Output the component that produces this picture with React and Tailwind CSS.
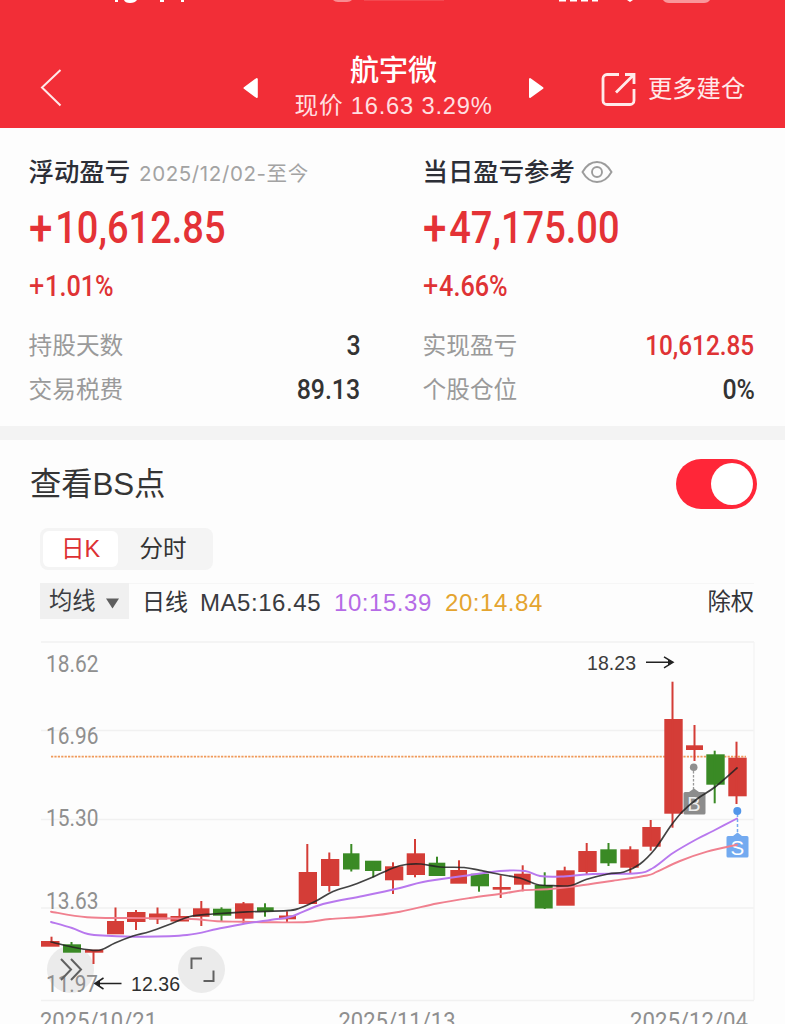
import React from "react";

const RED = "#d43d37";
const GREEN = "#3a8a25";

// [left, right, bodyTop, bodyBottom, wickX, wickTop, wickBottom, falling]
const candles = [
  [41, 59.5, 941, 946.7, 51.5, 936.7, 942, 0],
  [63, 81, 944.3, 952.7, 71.5, 942, 950, 1],
  [85, 103.3, 949.7, 952.7, 93.5, 950, 964, 0],
  [107, 124, 921, 934.3, 115.5, 907.5, 922, 0],
  [127, 145.5, 912, 922, 136, 910, 930, 0],
  [149, 167.3, 913.5, 919.5, 157.5, 907.5, 924, 0],
  [170.5, 189, 916, 921.5, 179.5, 908.5, 918, 0],
  [193, 209.5, 908.3, 916.8, 201.3, 901, 926, 0],
  [213, 231.3, 908.7, 915.7, 221.5, 907.3, 921.3, 1],
  [235, 253.5, 903.3, 918.7, 243.5, 902, 923.3, 0],
  [257, 273.7, 907.3, 911.5, 265, 903.3, 916.7, 1],
  [279, 296, 915.5, 919.3, 287, 911.3, 922, 0],
  [298.7, 317, 872, 904, 307.3, 844, 874, 0],
  [321, 339.3, 859, 886, 329.3, 852.5, 891.7, 0],
  [343, 359.5, 853.3, 869.5, 351.3, 844, 871.5, 1],
  [365, 381.3, 860.7, 871, 373.3, 861, 877.3, 1],
  [385, 403.3, 866.3, 880.3, 393, 862.3, 894, 0],
  [406.7, 425, 853.3, 875, 415, 839, 877.3, 0],
  [428.7, 445.3, 862.7, 876, 437, 856.7, 865, 1],
  [450.3, 467, 870, 883.7, 459, 860.3, 872, 0],
  [470.7, 489, 873.7, 886.3, 479, 875, 891.7, 1],
  [492.7, 510.7, 887, 889.7, 500.7, 875.3, 898, 0],
  [514, 530.7, 873.7, 884.7, 522.7, 865.3, 891.3, 0],
  [534.7, 552.7, 885, 908.5, 544.7, 872.3, 909, 1],
  [556.3, 574.7, 870.3, 905.7, 564.7, 866.7, 873, 0],
  [578.3, 596.7, 851, 872, 586.7, 843, 875, 0],
  [600.3, 616.7, 849.3, 863.3, 608.5, 843, 866, 1],
  [620.3, 638.7, 849.3, 867.7, 630.3, 846.3, 873.3, 0],
  [642.3, 660.7, 827, 846.7, 650.7, 820, 850.7, 0],
  [664.3, 682.7, 719, 813.7, 672.5, 681.7, 827.7, 0],
  [686, 703, 745.3, 750, 694.5, 725, 761, 0],
  [706.3, 724.7, 754.3, 784.7, 714.7, 750.7, 803.3, 1],
  [728.3, 746.7, 757.7, 796.3, 736.5, 741.7, 804, 0],
];

const ma5 = [[51, 942], [72, 947], [93, 950.3], [102, 949.5], [115, 943], [133, 936], [150, 931.5], [173, 923], [190, 916.5], [213, 914], [247, 911.8], [287, 910.7], [300, 908], [317, 900.5], [333, 891.5], [353, 885], [373, 877], [393, 868], [406, 864.5], [421, 864], [440, 867], [464, 867.5], [480, 870.3], [500, 874.5], [520, 878], [537, 884.5], [553, 885.7], [571, 885.5], [586, 879.5], [608, 874], [624, 872], [640, 864], [655, 849], [670, 827], [682, 812], [697, 799], [715, 787], [737, 768]];
const ma10 = [[51, 922], [72, 928], [88, 934], [107, 935.7], [143, 936.7], [187, 935], [217, 929], [243, 924], [277, 919], [293, 916], [323, 904], [363, 896], [400, 888], [423, 882], [463, 876], [500, 871], [525, 871], [540, 876], [561, 876.5], [593, 874], [637, 873.3], [653, 868], [673, 853], [697, 839], [713, 831], [737, 818.5]];
const ma20 = [[51, 911.7], [87, 917.3], [130, 918], [163, 918.3], [197, 919.3], [217, 921.3], [243, 921.7], [277, 922.3], [307, 922], [330, 919], [363, 916.7], [400, 911.7], [437, 903.5], [470, 898], [503, 893.5], [523, 890.3], [550, 889], [577, 886], [613, 880.7], [647, 875.5], [657, 871.7], [680, 861], [707, 851.7], [737, 844.7]];

function smooth(p) {
  let d = `M${p[0][0]} ${p[0][1]}`;
  for (let i = 0; i < p.length - 1; i++) {
    const a = p[i - 1] || p[i];
    const b = p[i];
    const c = p[i + 1];
    const e = p[i + 2] || c;
    d += `C${b[0] + (c[0] - a[0]) / 6} ${b[1] + (c[1] - a[1]) / 6} ${c[0] - (e[0] - b[0]) / 6} ${c[1] - (e[1] - b[1]) / 6} ${c[0]} ${c[1]}`;
  }
  return d;
}

function StatusBar() {
  return (
    <svg className="block h-2 w-full" viewBox="0 0 785 8" fill="#fff">
      <path d="M115 0h3v2h-3zM124 0h13q-2 3-7 3t-6-3zM160 0h4v2h-4zM181 0h3v2h-3z" />
      <path d="M333 0h19q-2 2-5 2h-9q-3 0-5-2z" opacity=".45" />
      <path d="M364 0h80v1h-80z" opacity=".12" />
      <path d="M559 0h7v1.5h-7zM570 0h7v1.5h-7zM581 0h7v1.5h-7zM592 0h6v1.5h-6zM627 0h6l-3 2z" />
      <path d="M663 0h47q-2 3-6 3h-35q-4 0-6-3z" opacity=".5" />
    </svg>
  );
}

function Header() {
  return (
    <header className="h-32 bg-[#f22e37] text-white">
      <StatusBar />
      <div className="flex h-[120px] items-start">
        <svg className="mt-[60px] ml-[40px] h-[40px] w-[22px]" viewBox="0 0 22 40" fill="none" stroke="#ffe9e9" strokeWidth="2">
          <path d="M20.5 2L2 19.5L20.5 37.5" />
        </svg>
        <svg className="mt-[69px] ml-[180px] h-[22px] w-[18px]" viewBox="0 0 18 22" fill="#fff" stroke="#fff" strokeWidth="2" strokeLinejoin="round">
          <path d="M2.5 11L14.8 2V20z" />
        </svg>
        <div className="flex w-[267px] flex-col items-center pt-[45px]">
          <h1 className="h-[36px] text-[29px] leading-[36px] font-medium whitespace-nowrap">航宇微</h1>
          <p className="text-[23.7px] leading-[34px] tracking-[0.8px] whitespace-nowrap text-[#ffdfe0]">现价 16.63 3.29%</p>
        </div>
        <svg className="mt-[69px] -ml-px h-[22px] w-[20px]" viewBox="0 0 20 22" fill="#fff" stroke="#fff" strokeWidth="2" strokeLinejoin="round">
          <path d="M16.5 11L4 2V20z" />
        </svg>
        <svg className="mt-[62px] ml-[54px] h-[38px] w-[38px]" viewBox="600 70 38 38" fill="none" stroke="#ffeaea" strokeWidth="2.8">
          <path d="M619 74.5H607a4 4 0 0 0-4 4v22a4 4 0 0 0 4 4h23a4 4 0 0 0 4-4V89M625 74.5h9V84M634 74.5L616 92.5" />
        </svg>
        <span className="mt-[64px] ml-[10px] text-[24.3px] leading-[34px] whitespace-nowrap text-[#ffeaea]">更多建仓</span>
      </div>
    </header>
  );
}

function Row({ label, value, red }) {
  return (
    <div className="flex h-11 items-center justify-between">
      <span className="mt-[4px] text-[23.7px] text-[#9a9a9a]">{label}</span>
      <span className={`mt-[2px] origin-right font-[Roboto] text-[27.5px] font-medium whitespace-nowrap ${red ? "scale-x-[0.885] text-[#df3335]" : "scale-x-[0.905] text-[#333]"}`}>{value}</span>
    </div>
  );
}

function Gain({ amount, percent }) {
  return (
    <>
      <div className="mt-[10px] flex h-14 w-fit origin-left scale-x-[0.845] font-[Roboto] text-[45px] leading-[56px] font-medium text-[#e43236]">
        <span className="w-[31px] text-[50px]">+</span>
        <span>{amount}</span>
      </div>
      <div className="mt-[10px] flex h-10 w-fit origin-left scale-x-[0.87] font-[Roboto] text-[29px] leading-[40px] font-medium text-[#df3335]">
        <span className="w-[18.5px] text-[31px] font-normal">+</span>
        <span>{percent}</span>
      </div>
    </>
  );
}

function Summary() {
  return (
    <section className="flex h-[298px] gap-[62px] pt-[26px] pl-[28.5px]">
      <div className="w-[332px]">
        <div className="flex h-9 items-center">
          <h2 className="mt-px text-[25.4px] font-medium text-[#2c2e36]">浮动盈亏</h2>
          <span className="mt-[4px] ml-[9px] font-['Inter','Noto_Sans_CJK_SC',sans-serif] text-[20.5px] tracking-[0.6px] whitespace-nowrap text-[#a3a3a3]">2025/12/02-至今</span>
        </div>
        <Gain amount="10,612.85" percent="1.01%" />
        <div className="mt-[17px]">
          <Row label="持股天数" value="3" />
          <Row label="交易税费" value="89.13" />
        </div>
      </div>
      <div className="w-[332px]">
        <div className="flex h-9 items-center">
          <h2 className="mt-px text-[25.4px] font-medium whitespace-nowrap text-[#2c2e36]">当日盈亏参考</h2>
          <svg className="ml-[6px] h-6 w-[32px]" viewBox="0 0 32 24" fill="none" stroke="#9c9c9c" strokeWidth="1.9">
            <path d="M1.5 12C5.5 5 10 2 16 2s10.5 3 14.5 10C26.5 19 22 22 16 22S5.5 19 1.5 12z" />
            <circle cx="16" cy="12" r="5" />
          </svg>
        </div>
        <Gain amount="47,175.00" percent="4.66%" />
        <div className="mt-[17px]">
          <Row label="实现盈亏" value="10,612.85" red />
          <Row label="个股仓位" value="0%" />
        </div>
      </div>
    </section>
  );
}

function Controls() {
  return (
    <section className="pt-[18px]">
      <div className="flex h-[52px] items-center justify-between pr-[28px] pl-[30px]">
        <h2 className="mt-[3px] text-[31.3px] tracking-[-0.1px] text-[#353535]">查看BS点</h2>
        <div className="flex h-[50px] w-[81px] items-center justify-end rounded-full bg-[#ff2638] pr-[4px]">
          <span className="size-[42px] rounded-full bg-white" />
        </div>
      </div>
      <div className="mt-[18px] ml-[40px] flex h-[42px] w-[173px] rounded-[8px] bg-[#f4f4f4] p-[3px] text-[23.5px] leading-[36px]">
        <div className="h-9 w-[75px] rounded-[6px] bg-white text-center text-[#dd3033]">日K</div>
        <div className="flex-1 text-center text-[#333]"><span className="-ml-[2px]">分时</span></div>
      </div>
      <div className="mt-[13px] ml-[40px] flex h-[38px] w-[714px] items-start border-t border-[#f6f6f6] leading-[37px] whitespace-nowrap">
        <div className="-mt-px flex h-[36px] w-[89px] items-center bg-[#f0f0f0] pl-[9px]">
          <span className="text-[23.3px] leading-[34px] text-[#3d3e42]">均线</span>
          <svg className="mt-[4px] ml-[10px] h-[11px] w-[13px]" viewBox="0 0 14 11" fill="#5e5e5e"><path d="M0 0H14L7 11z" /></svg>
        </div>
        <span className="ml-[13px] text-[23px] text-[#333439]">日线</span>
        <span className="ml-[12px] w-[134px] text-[24px] tracking-[0.55px] text-[#3a3b40]">MA5:16.45</span>
        <span className="w-[111px] text-[24px] tracking-[0.55px] text-[#b56be6]">10:15.39</span>
        <span className="text-[24px] tracking-[0.55px] text-[#e4a42f]">20:14.84</span>
        <span className="ml-auto text-[23.3px] text-[#333439]">除权</span>
      </div>
    </section>
  );
}

function AxisText({ x, y, w, children }) {
  return (
    <text x={x} y={y} textLength={w} lengthAdjust="spacingAndGlyphs" fill="#8f8f8f" className="font-[Roboto] text-[24px]">
      {children}
    </text>
  );
}

function Chart() {
  return (
    <svg className="block h-[403px] w-[785px]" viewBox="0 621 785 403">
      <g stroke="#f1f1f1" strokeWidth="1.3">
        <path d="M41 642H754M41 730.5H754M41 819.5H754M41 908H754M41 1000.5H754" />
        <path d="M754 642V1000" stroke="#f5f5f5" />
      </g>
      <path d="M51 756.7H746" stroke="#f09a5a" strokeWidth="1.8" strokeDasharray="2.2 1.2" />
      <circle cx="70.5" cy="969.5" r="23.5" fill="#ebebeb" />
      <circle cx="201.5" cy="969.5" r="23.5" fill="#ebebeb" />

      <AxisText x={46} y={672} w={52.5}>18.62</AxisText>
      <AxisText x={46} y={743.5} w={52.5}>16.96</AxisText>
      <AxisText x={46} y={826} w={52.5}>15.30</AxisText>
      <AxisText x={46} y={909} w={52.5}>13.63</AxisText>
      <AxisText x={46} y={992} w={52}>11.97</AxisText>
      <AxisText x={40} y={1029} w={117}>2025/10/21</AxisText>
      <AxisText x={338.5} y={1029} w={117}>2025/11/13</AxisText>
      <AxisText x={630} y={1029} w={118}>2025/12/04</AxisText>

      {candles.map((c) => (
        <g key={c[0]} fill={c[7] ? GREEN : RED}>
          <rect x={c[0]} y={c[2]} width={c[1] - c[0]} height={c[3] - c[2]} />
          <rect x={c[4] - 1} y={c[5]} width="2" height={c[6] - c[5]} />
        </g>
      ))}

      <path d="M693.5 771V791" stroke="#999" strokeWidth="1.3" strokeDasharray="2.5 1.5" />
      <circle cx="693.7" cy="767.3" r="3.8" fill="#8f8f8f" />
      <path d="M685 792H689L694 788.5L699 792H704a1.5 1.5 0 0 1 1.5 1.5V813a1.5 1.5 0 0 1-1.5 1.5H685a1.5 1.5 0 0 1-1.5-1.5V793.5a1.5 1.5 0 0 1 1.5-1.5z" fill="#8c8c8c" />
      <text x="694" y="810.5" textAnchor="middle" fill="#eee" className="text-[20px]">B</text>
      <path d="M737.5 814V832" stroke="#74aaf0" strokeWidth="1.5" strokeDasharray="3 2" />
      <circle cx="737.3" cy="811" r="4" fill="#5296ea" />
      <path d="M728 836H733L737.5 832.5L742 836H747a1.5 1.5 0 0 1 1.5 1.5V856a1.5 1.5 0 0 1-1.5 1.5H728a1.5 1.5 0 0 1-1.5-1.5V837.5a1.5 1.5 0 0 1 1.5-1.5z" fill="#73aaf0" />
      <text x="737.3" y="854.5" textAnchor="middle" fill="#fff" className="text-[20.5px]">S</text>

      <g fill="none" strokeLinecap="round">
        <path d={smooth(ma20)} stroke="#f0808f" strokeWidth="1.9" />
        <path d={smooth(ma10)} stroke="#b878ee" strokeWidth="1.9" />
        <path d={smooth(ma5)} stroke="#222" strokeOpacity=".85" strokeWidth="1.7" />
      </g>

      <g fill="none" stroke="#606060" strokeWidth="2">
        <path d="M61 959L71 969.5L61 980M71 959L81 969.5L71 980" />
        <path d="M191.5 969V958.5H202M203.5 981H213.5V970.5" />
      </g>
      <g stroke="#222" strokeWidth="1.5" fill="none">
        <path d="M95 983.5H121.5M103.5 978L95 983.5L103.5 989" />
        <path d="M646 662.3H673M664 656.8L673 662.3L664 667.8" />
        <path d="M95 983.5L100 980.5V986.5zM673 662.3L668 659.5V665.5z" fill="#222" stroke="none" />
      </g>
      <text x="131" y="991" textLength="49" fill="#303030" className="text-[19.5px]">12.36</text>
      <text x="587" y="670" textLength="49" fill="#3c3c3c" className="text-[19.5px]">18.23</text>
    </svg>
  );
}

export default function App() {
  return (
    <div className="h-[1024px] w-[785px] overflow-hidden bg-[#fdfdfd] font-['Liberation_Sans','Noto_Sans_CJK_SC',sans-serif]">
      <Header />
      <Summary />
      <div className="h-[14px] bg-[#f3f3f3]" />
      <Controls />
      <Chart />
    </div>
  );
}
